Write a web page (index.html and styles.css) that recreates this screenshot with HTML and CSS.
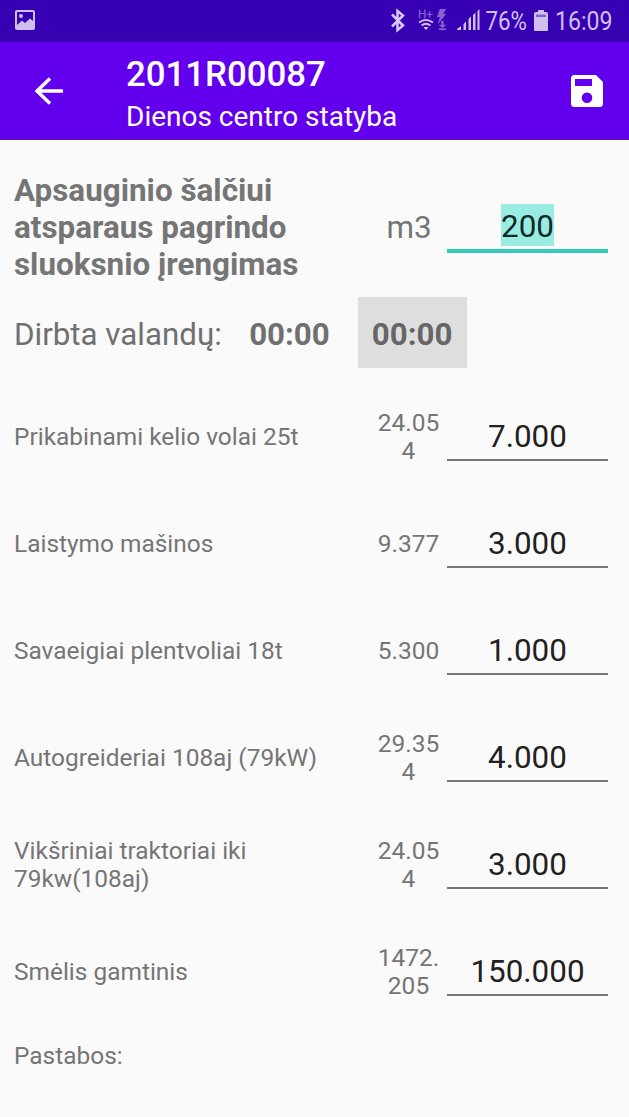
FILE: index.html
```
<!DOCTYPE html>
<html lang="lt">
<head>
<meta charset="utf-8">
<title>Dienos centro statyba</title>
<link rel="stylesheet" href="styles.css">
</head>
<body>
<div class="status">
  <svg class="status-photo" viewBox="0 0 20 20"><path fill-rule="evenodd" d="M2 0H18Q20 0 20 2V18Q20 20 18 20H2Q0 20 0 18V2Q0 0 2 0ZM2 2V15L7 10.500L10 13L15 8.500L18 11V2ZM6 4A2 2 0 1 1 6 8A2 2 0 0 1 6 4Z"/></svg>
  <svg class="status-right" viewBox="0 0 239 41">
    <path class="bt" d="M2 14.500L13 25.500L7.500 30V11L13 15.500L2 26.500"/>
    <g class="dim"><text x="28" y="18" font-size="11.500" textLength="15" lengthAdjust="spacingAndGlyphs">H+</text>
    <path d="M50 9H56L53 14H56L48 24L50 17H47Z"/><path d="M51.500 21H53.500V25H56L52.500 28L49 25H51.500ZM49 28.500H56V30H49Z"/></g>
    <g class="wifi"><path d="M29 22.500Q36 17.500 43 22.500M31.500 25.500Q36 22 40.500 25.500"/><path class="solid" d="M33.500 27.500Q36 26 38.500 27.500L36 30Z"/></g>
    <path d="M67 30V29L71 26V30ZM73.500 30V24L76 21.500V30ZM78.500 30V19L81 16.500V30ZM83 30V15L85.500 12.500V30ZM87.500 30V11L89.500 9V30Z"/>
    <text x="95.500" y="30" font-size="25" textLength="41.500" lengthAdjust="spacingAndGlyphs">76%</text>
    <path d="M148 10H154V12H156Q158 12 158 14V30Q158 31 157 31H145Q144 31 144 30V14Q144 12 146 12H148Z"/><path class="level" d="M146 14.500H156V17H146Z"/>
    <text x="165" y="30" font-size="25" textLength="57.500" lengthAdjust="spacingAndGlyphs">16:09</text>
  </svg>
</div>
<header class="bar">
  <svg class="back" viewBox="0 0 28 28"><path d="M28 14H2M15 1.500L2 14L15 26.500"/></svg>
  <div class="heading"><div class="code">2011R00087</div><div class="project">Dienos centro statyba</div></div>
  <svg class="save" viewBox="0 0 32 32"><path fill-rule="evenodd" d="M3.500 0H25L32 7V28.500Q32 32 28.500 32H3.500Q0 32 0 28.500V3.500Q0 0 3.500 0ZM4 4V11H21V4ZM16 17.500A5.300 5.300 0 1 0 16 28.100A5.300 5.300 0 0 0 16 17.500Z"/></svg>
</header>
<main>
  <section class="row work"><div class="title">Apsauginio šalčiui atsparaus pagrindo sluoksnio įrengimas</div><div class="unit">m3</div><div class="field active"><span>200</span></div></section>
  <section class="hours"><span class="label">Dirbta valandų:</span><b>00:00</b><b class="chip">00:00</b></section>
  <section class="row"><div class="name">Prikabinami kelio volai 25t</div><div class="qty">24.054</div><div class="field">7.000</div></section>
  <section class="row"><div class="name">Laistymo mašinos</div><div class="qty">9.377</div><div class="field">3.000</div></section>
  <section class="row"><div class="name">Savaeigiai plentvoliai 18t</div><div class="qty">5.300</div><div class="field">1.000</div></section>
  <section class="row"><div class="name">Autogreideriai 108aj (79kW)</div><div class="qty">29.354</div><div class="field">4.000</div></section>
  <section class="row"><div class="name">Vikšriniai traktoriai iki 79kw(108aj)</div><div class="qty">24.054</div><div class="field">3.000</div></section>
  <section class="row"><div class="name">Smėlis gamtinis</div><div class="qty">1472.<wbr>205</div><div class="field">150.000</div></section>
  <div class="notes">Pastabos:</div>
</main>
</body>
</html>
```
FILE: styles.css
```
* { box-sizing: border-box; }
body { margin: 0; width: 629px; height: 1117px; overflow: hidden; background: #fafafa; color: #757575; font-family: Roboto, "Noto Sans", sans-serif; font-size: 24.45px; line-height: 28.4px; }
svg { display: block; flex: none; }
.status { height: 42px; background: #3700b3; display: flex; justify-content: space-between; padding-left: 15px; }
.status-photo { width: 20px; height: 20px; margin-top: 10px; fill: #cfbff0; }
.status-right { width: 239px; height: 41px; fill: #d0c0f0; }
.status-right .bt { fill: none; stroke: #d8c8f5; stroke-width: 2.5; }
.status-right .dim { fill: #8562d2; stroke: #8562d2; stroke-width: 0.3; }
.status-right .wifi { fill: none; stroke: #d0c0f0; stroke-width: 1.8; }
.status-right .solid { fill: #d0c0f0; stroke: none; }
.status-right .level { fill: #8562d2; }
.bar { height: 98px; background: #6200ee; color: #fff; display: flex; align-items: center; padding: 0 26px 0 35px; border-bottom: 1px solid #5a16c4; }
.back { width: 28px; height: 28px; fill: none; stroke: #fff; stroke-width: 3.4; }
.heading { flex: 1; margin-left: 63px; padding-top: 5px; }
.code { font-size: 34.8px; font-weight: 500; line-height: 41px; }
.project { font-size: 28px; line-height: 33px; margin-top: 5px; }
.save { width: 32px; height: 32px; fill: #fff; }
.row { display: grid; grid-template-columns: 356px 63px 161px; column-gap: 7px; align-items: center; height: 107px; padding-left: 14px; }
.row.work { grid-template-columns: 300px 119px 161px; height: 142px; padding-top: 33px; }
.title { font-size: 31.4px; font-weight: 700; line-height: 36.8px; }
.unit { font-size: 31.4px; text-align: center; padding: 0 0 2px 57px; line-height: 37px; }
.name, .qty { padding-top: 1px; }
.qty { text-align: center; word-break: break-all; font-size: 24.5px; }
.field { height: 49px; border-bottom: 2px solid #757575; color: #212121; font-size: 31.4px; line-height: 49px; text-align: center; }
.field.active { border-bottom: 4px solid #36c9bc; line-height: 45px; color: #102b28; }
.active span { display: inline-block; background: #99ece2; height: 42px; }
.hours { display: flex; align-items: center; height: 71px; margin-top: 15px; padding-left: 14px; font-size: 31.3px; line-height: 75px; color: #707070; }
.hours b { margin-left: 28px; }
.hours .label { margin-right: -0.6px; }
.hours .chip { background: #dedede; color: #666; height: 71px; padding: 0 14.6px 0 14px; }
.hours .label, .hours b:not(.chip) { height: 71px; }
.hours + .row { margin-top: 15px; }
.name { padding-right: 20px; }
.notes { margin: 17px 0 0 14px; }
```
